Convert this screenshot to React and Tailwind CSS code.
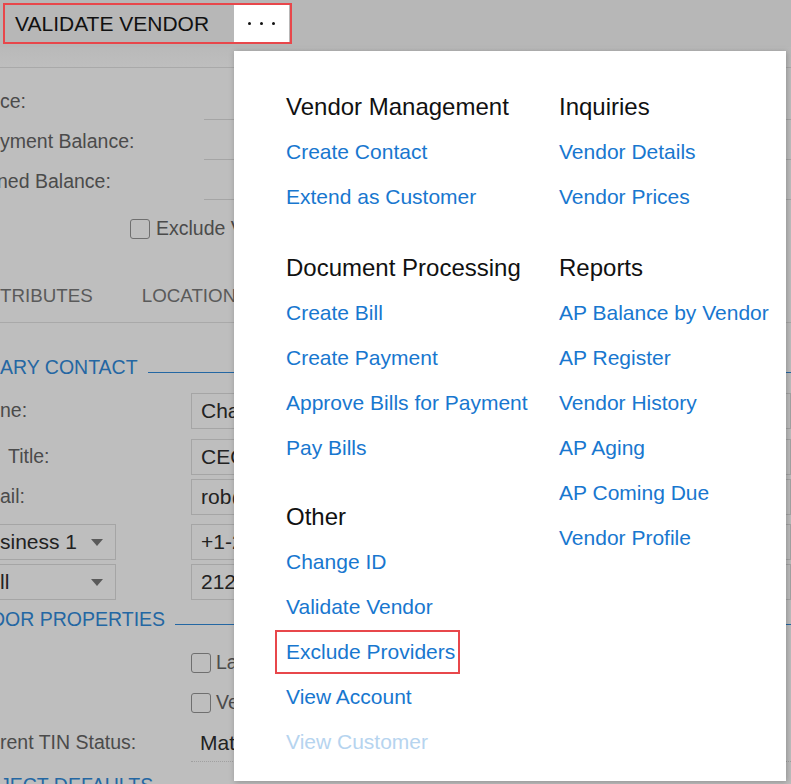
import { ChevronDown } from "lucide-react";

const MENU_LEFT = [
  {
    title: "Vendor Management",
    items: ["Create Contact", "Extend as Customer"],
  },
  {
    title: "Document Processing",
    items: ["Create Bill", "Create Payment", "Approve Bills for Payment", "Pay Bills"],
    gap: "mt-[26px]",
  },
  {
    title: "Other",
    items: ["Change ID", "Validate Vendor", "Exclude Providers", "View Account", "View Customer"],
    gap: "mt-[24px]",
  },
];

const MENU_RIGHT = [
  {
    title: "Inquiries",
    items: ["Vendor Details", "Vendor Prices"],
  },
  {
    title: "Reports",
    items: [
      "AP Balance by Vendor",
      "AP Register",
      "Vendor History",
      "AP Aging",
      "AP Coming Due",
      "Vendor Profile",
    ],
    gap: "mt-[26px]",
  },
];

const MenuSection = ({ title, items, gap = "" }) => (
  <div className={`flex flex-col ${gap}`}>
    <div className="h-[45px] leading-[45px] text-[24px] text-[#111111] whitespace-nowrap">
      {title}
    </div>
    {items.map((item) => {
      if (item === "Exclude Providers") {
        return (
          <div key={item} className="h-[45px] flex items-center">
            <span className="-ml-[11px] pl-[9px] pr-[3px] h-[44px] leading-[40px] border-2 border-[#e8474b] text-[21px] text-[#1877cf] whitespace-nowrap">
              {item}
            </span>
          </div>
        );
      }
      const disabled = item === "View Customer";
      return (
        <div
          key={item}
          className={`h-[45px] leading-[45px] text-[21px] whitespace-nowrap ${
            disabled ? "text-[#b6d4ef]" : "text-[#1877cf]"
          }`}
        >
          {item}
        </div>
      );
    })}
  </div>
);

const Checkbox = () => (
  <span className="inline-block w-[20px] h-[20px] border-[1.5px] border-[#6f6f6f] rounded-[3px] shrink-0" />
);

const SectionHeader = ({ text, top, shift = "" }) => (
  <div className={`flex items-center h-[24px] ${top}`}>
    <span className={`text-[19.5px] leading-[24px] text-[#2467a3] whitespace-nowrap ${shift}`}>
      {text}
    </span>
    <div className="flex-1 h-px bg-[#2467a3] mt-[10px] ml-[10px]" />
  </div>
);

const App = () => {
  return (
    <div className="relative w-[791px] h-[784px] overflow-hidden bg-[#bebebe] font-['Liberation_Sans',Arial,sans-serif]">
      {/* Toolbar */}
      <div className="h-[68px] border-b border-[#a9a9a9]">
        <div className="h-[47px] bg-[#b7b7b7] pt-[3px] pl-[3px]">
          <div className="flex w-[289px] h-[41px] border-2 border-[#e8474b]">
            <div className="w-[229px] flex items-center pl-[10px] text-[21px] text-[#111111] whitespace-nowrap">
              VALIDATE VENDOR
            </div>
            <div className="w-[55px] bg-white flex items-center justify-center gap-[9px] pb-[1px]">
              <span className="w-[3px] h-[3px] rounded-full bg-[#111]" />
              <span className="w-[3px] h-[3px] rounded-full bg-[#111]" />
              <span className="w-[3px] h-[3px] rounded-full bg-[#111]" />
            </div>
          </div>
        </div>
        <div className="h-[20px] bg-gradient-to-b from-[#b9b9b9] to-[#bebebe]" />
      </div>

      {/* Dimmed form behind the menu */}
      <div className="text-[19.5px] text-[#4b4b4b]">
        <div className="pt-[12px]">
          {[
            { label: "ce:", shift: "" },
            { label: "yment Balance:", shift: "" },
            { label: "ned Balance:", shift: "-ml-[3px]" },
          ].map((r) => (
            <div key={r.label} className="flex h-[40px]">
              <div className="w-[204px] flex items-center pt-[3px] whitespace-nowrap">
                <span className={r.shift}>{r.label}</span>
              </div>
              <div className="flex-1 border-b border-[#a5a5a5]" />
            </div>
          ))}
        </div>
        <div className="h-[56px] flex items-center pl-[130px] gap-[6px] pt-[2px]">
          <Checkbox />
          <span className="whitespace-nowrap">Exclude Vendor</span>
        </div>
        <div className="h-[67px] border-b border-[#a9a9a9] flex items-end pb-[14px] gap-[49px] text-[18.75px] text-[#5a5a5a] leading-[24px]">
          <span>TRIBUTES</span>
          <span>LOCATIONS</span>
        </div>

        <SectionHeader text="ARY CONTACT" top="mt-[32px]" />

        {[
          { label: "ne:", value: "Chad", mt: "mt-[14px]" },
          { label: "Title:", value: "CEO", mt: "mt-[10px]", pl: "pl-[8px]" },
          { label: "ail:", value: "rob@", mt: "mt-[4px]" },
        ].map((r) => (
          <div key={r.label} className={`flex h-[36px] ${r.mt}`}>
            <div className={`w-[191px] flex items-center whitespace-nowrap ${r.pl || ""}`}>
              {r.label}
            </div>
            <div className="flex-1 border border-[#a5a5a5] flex items-center pl-[9px] text-[21px] text-[#222222] whitespace-nowrap">
              {r.value}
            </div>
          </div>
        ))}

        {[
          { label: "siness 1", value: "+1-212", mt: "mt-[9px]" },
          { label: "ll", value: "212-", mt: "mt-[4px]" },
        ].map((r) => (
          <div key={r.label} className={`flex h-[36px] ${r.mt}`}>
            <div className="w-[116px] border border-l-0 border-[#a5a5a5] flex items-center justify-between pr-[12px] text-[21px] text-[#222222] whitespace-nowrap">
              <span>{r.label}</span>
              <svg width="12" height="7" viewBox="0 0 12 7">
                <path d="M0 0h12L6 7z" fill="#5a5a5a" />
              </svg>
            </div>
            <div className="w-[75px]" />
            <div className="flex-1 border border-[#a5a5a5] flex items-center pl-[9px] text-[21px] text-[#222222] whitespace-nowrap">
              {r.value}
            </div>
          </div>
        ))}

        <SectionHeader text="DOR PROPERTIES" top="mt-[7px]" shift="-ml-[9px]" />

        <div className="mt-[22px] h-[20px] flex items-center pl-[191px] gap-[5px]">
          <Checkbox />
          <span className="whitespace-nowrap">Landlord</span>
        </div>
        <div className="mt-[20px] h-[20px] flex items-center pl-[191px] gap-[5px]">
          <Checkbox />
          <span className="whitespace-nowrap">Vendor is 1099</span>
        </div>

        <div className="mt-[11px] h-[38px] flex">
          <div className="w-[191px] flex items-center whitespace-nowrap">rent TIN Status:</div>
          <div className="flex-1 border-b border-dotted border-[#a0a0a0] flex items-center pl-[9px] text-[21px] text-[#222222]">
            Matched
          </div>
        </div>

        <div className="mt-[11px] text-[19.5px] leading-[24px] text-[#2467a3] whitespace-nowrap">
          JECT DEFAULTS
        </div>
      </div>

      {/* Actions menu */}
      <div className="absolute left-[234px] top-[51px] w-[552px] h-[730px] bg-white shadow-[1px_1px_6px_rgba(0,0,0,0.25)] pl-[52px] pt-[33px] flex">
        <div className="w-[273px] flex flex-col">
          {MENU_LEFT.map((s) => (
            <MenuSection key={s.title} {...s} />
          ))}
        </div>
        <div className="flex flex-col">
          {MENU_RIGHT.map((s) => (
            <MenuSection key={s.title} {...s} />
          ))}
        </div>
      </div>
    </div>
  );
};

export default App;
